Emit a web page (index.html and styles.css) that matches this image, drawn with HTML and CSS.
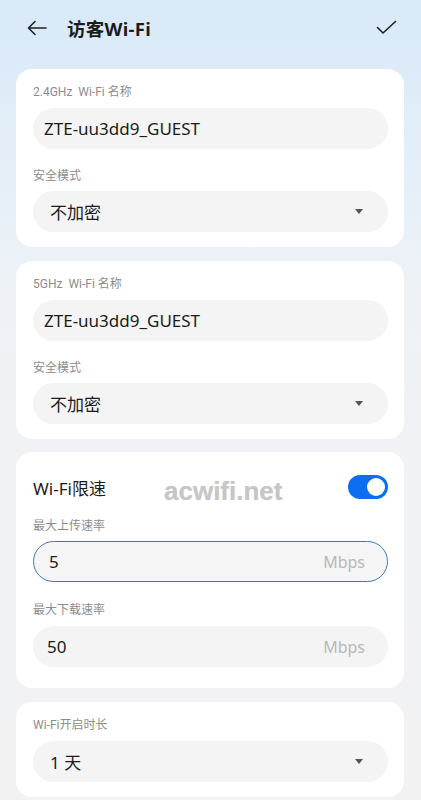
FILE: index.html
```html
<!DOCTYPE html>
<html lang="zh">
<head>
<meta charset="utf-8">
<link rel="stylesheet" href="styles.css">
</head>
<body>
<div class="page">
  <header class="topbar">
    <svg class="back" width="20" height="16" viewBox="0 0 20 16"><path d="M19 8H2M8 1.5L1.5 8L8 14.5" fill="none" stroke="#222" stroke-width="1.6" stroke-linecap="round" stroke-linejoin="round"/></svg>
    <h1 class="title">访客Wi-Fi</h1>
    <svg class="check" width="21" height="15" viewBox="0 0 21 15"><path d="M1.5 7.5L7 13L19.5 1.5" fill="none" stroke="#222" stroke-width="1.6" stroke-linecap="round" stroke-linejoin="round"/></svg>
  </header>

  <section class="card">
    <div class="label">2.4GHz &nbsp;Wi-Fi 名称</div>
    <div class="field"><span class="value">ZTE-uu3dd9_GUEST</span></div>
    <div class="label gap">安全模式</div>
    <div class="field select"><span class="value">不加密</span><span class="caret"></span></div>
  </section>

  <section class="card">
    <div class="label">5GHz &nbsp;Wi-Fi 名称</div>
    <div class="field"><span class="value">ZTE-uu3dd9_GUEST</span></div>
    <div class="label gap">安全模式</div>
    <div class="field select"><span class="value">不加密</span><span class="caret"></span></div>
  </section>

  <section class="card limit">
    <div class="switch-row">
      <span class="switch-title">Wi-Fi限速</span>
      <span class="toggle"><span class="knob"></span></span>
    </div>
    <span class="watermark">acwifi.net</span>
    <div class="label gap">最大上传速率</div>
    <div class="field focus"><span class="value num">5</span><span class="unit">Mbps</span></div>
    <div class="label gap2">最大下载速率</div>
    <div class="field"><span class="value num">50</span><span class="unit">Mbps</span></div>
  </section>

  <section class="card">
    <div class="label">Wi-Fi开启时长</div>
    <div class="field select"><span class="value num">1 天</span><span class="caret"></span></div>
  </section>
</div>
</body>
</html>
```

FILE: styles.css
```css
* { box-sizing: border-box; }
html, body { margin: 0; padding: 0; }
body {
  font-family: "Noto Sans", "Noto Sans CJK SC", sans-serif;
  background: linear-gradient(180deg, #d8e9f8 0px, #e3eef8 140px, #eef2f6 300px, #f1f2f4 500px, #f2f2f3 800px);
  min-height: 800px;
  color: #1b1b1b;
}
.page {
  padding: 0 17px 0 16px;
  display: flex;
  flex-direction: column;
  gap: 13.5px;
}
.topbar {
  height: 55.5px;
  display: flex;
  align-items: center;
  padding: 0 7px 0 11px;
}
.back { flex: none; margin-top: 1px; }
.title {
  margin: 0 0 0 20px;
  font-size: 18.5px;
  font-weight: 700;
  flex: 1;
  color: #1b1b1b;
  letter-spacing: 0.3px;
}
.check { flex: none; margin-top: 0; }
.card {
  background: #fff;
  border-radius: 16px;
  padding: 15px 16px 15px 17px;
  position: relative;
}
.label {
  font-family: "Roboto", "Noto Sans CJK SC", sans-serif;
  font-size: 12px;
  line-height: 16px;
  color: #8c8c8c;
  margin-bottom: 8px;
}
.label.gap { margin-top: 19px; margin-bottom: 7px; }
.label.gap2 { margin-top: 20px; margin-bottom: 8px; }
.field {
  height: 41px;
  border-radius: 20.5px;
  background: #f4f4f4;
  display: flex;
  align-items: center;
  padding: 0 23px 0 11px;
}
.value { font-size: 17px; color: #1b1b1b; }
.select .value { padding-left: 6px; }
.num { padding-left: 3px; }
.select { justify-content: space-between; padding-right: 25px; }
.caret {
  width: 0; height: 0;
  border-left: 4.5px solid transparent;
  border-right: 4.5px solid transparent;
  border-top: 5px solid #555;
}
.unit { margin-left: auto; font-size: 16px; color: #b8b8b8; }
.field.focus {
  border: 1.5px solid #3f78c0;
  background: #f5f5f5;
  padding-left: 12px;
}
.field.focus .unit { margin-right: -1px; }
.limit { padding-top: 23px; padding-bottom: 21px; }
.switch-row {
  display: flex;
  align-items: center;
  justify-content: space-between;
  height: 24px;
}
.switch-title { font-size: 17px; color: #1b1b1b; }
.toggle {
  width: 40px; height: 24px;
  border-radius: 12px;
  background: #0b6df0;
  position: relative;
}
.knob {
  position: absolute;
  right: 3px; top: 3px;
  width: 18px; height: 18px;
  border-radius: 50%;
  background: #fff;
}
.watermark {
  position: absolute;
  left: 148px; top: 24px;
  font-family: "Liberation Sans", sans-serif;
  font-weight: 700;
  font-size: 26px;
  color: #c6c6c6;
  text-shadow: 0 0 1px #ddd;
  letter-spacing: 0;
}
```
